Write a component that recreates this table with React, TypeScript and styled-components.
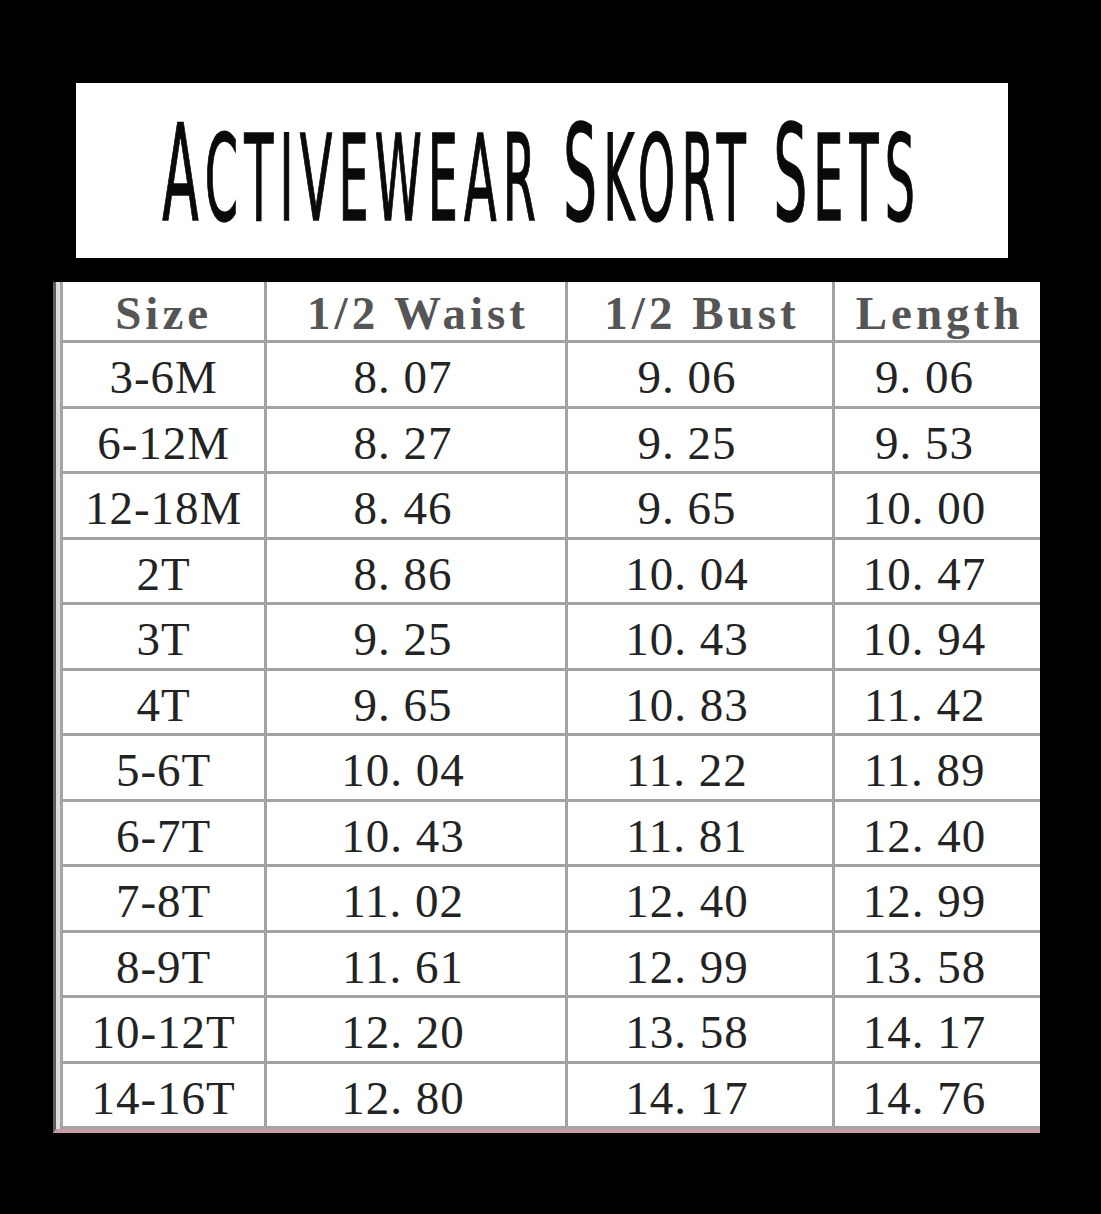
import React from "react";
import styled, { createGlobalStyle } from "styled-components";

const GlobalStyle = createGlobalStyle`
  html, body {
    margin: 0;
    padding: 0;
    background: #000;
  }
`;

const Page = styled.div`
  width: 1101px;
  height: 1214px;
  box-sizing: border-box;
  padding-top: 83px;
  background: #000;
  overflow: hidden;
`;

const TitleBox = styled.div`
  margin-left: 76px;
  width: 932px;
  height: 175px;
  background: #fff;
  display: flex;
  align-items: center;
  justify-content: center;
`;

const Title = styled.h1`
  margin: 8px 0 0 0;
  font-family: "Liberation Sans Narrow", "DejaVu Sans Condensed", "Liberation Sans", sans-serif;
  font-weight: 400;
  font-size: 119px;
  line-height: 1;
  color: #0a0a0a;
  text-transform: uppercase;
  white-space: nowrap;
  letter-spacing: 14px;
  transform: scaleX(0.444);
  -webkit-text-stroke: 1.5px #0a0a0a;
`;

const Cap = styled.span`
  font-size: 133px;
`;

const Frame = styled.div`
  margin: 24px 0 0 53px;
  width: 987px;
  box-sizing: border-box;
  border-left: 3px solid #5e5e5e;
  border-bottom: 4px solid #c99ba4;
  padding-left: 4px;
  background: #dedede;
`;

const SizeTable = styled.table`
  width: 980px;
  border-collapse: collapse;
  table-layout: fixed;
  background: #fff;
  font-family: "Liberation Serif", "DejaVu Serif", serif;
  border-left: 3px solid #a6a6a6;
`;

const HeadRow = styled.tr`
  height: 58px;
`;

const BodyRow = styled.tr`
  height: 65.5px;
`;

const HeadCell = styled.th<{ $first?: boolean }>`
  padding: 4px 0 0 ${(p) => (p.$first ? "0" : "4px")};
  border-bottom: 3px solid #a3a3a3;
  border-left: ${(p) => (p.$first ? "none" : "3px solid #a3a3a3")};
  font-size: 47px;
  font-weight: 700;
  letter-spacing: 4px;
  color: #555;
  text-align: center;
  vertical-align: middle;
`;

const Cell = styled.td<{ $size?: boolean }>`
  padding: 6px ${(p) => (p.$size ? "0" : "26px")} 0 0;
  border-bottom: 3px solid #a3a3a3;
  border-left: ${(p) => (p.$size ? "none" : "3px solid #a3a3a3")};
  font-size: 47px;
  letter-spacing: 1px;
  color: #232323;
  text-align: center;
  vertical-align: middle;
  white-space: nowrap;
`;

const rows: [string, string, string, string][] = [
  ["3-6M", "8. 07", "9. 06", "9. 06"],
  ["6-12M", "8. 27", "9. 25", "9. 53"],
  ["12-18M", "8. 46", "9. 65", "10. 00"],
  ["2T", "8. 86", "10. 04", "10. 47"],
  ["3T", "9. 25", "10. 43", "10. 94"],
  ["4T", "9. 65", "10. 83", "11. 42"],
  ["5-6T", "10. 04", "11. 22", "11. 89"],
  ["6-7T", "10. 43", "11. 81", "12. 40"],
  ["7-8T", "11. 02", "12. 40", "12. 99"],
  ["8-9T", "11. 61", "12. 99", "13. 58"],
  ["10-12T", "12. 20", "13. 58", "14. 17"],
  ["14-16T", "12. 80", "14. 17", "14. 76"],
];

const App = () => {
  return (
    <Page>
      <GlobalStyle />
      <TitleBox>
        <Title>
          <Cap>A</Cap>ctivewear <Cap>S</Cap>kort <Cap>S</Cap>ets
        </Title>
      </TitleBox>
      <Frame>
        <SizeTable>
          <colgroup>
            <col style={{ width: 204 }} />
            <col style={{ width: 300 }} />
            <col style={{ width: 267 }} />
            <col style={{ width: 206 }} />
          </colgroup>
          <thead>
            <HeadRow>
              <HeadCell $first>Size</HeadCell>
              <HeadCell>1/2 Waist</HeadCell>
              <HeadCell>1/2 Bust</HeadCell>
              <HeadCell>Length</HeadCell>
            </HeadRow>
          </thead>
          <tbody>
            {rows.map((r) => (
              <BodyRow key={r[0]}>
                <Cell $size>{r[0]}</Cell>
                <Cell>{r[1]}</Cell>
                <Cell>{r[2]}</Cell>
                <Cell>{r[3]}</Cell>
              </BodyRow>
            ))}
          </tbody>
        </SizeTable>
      </Frame>
    </Page>
  );
};

export default App;
